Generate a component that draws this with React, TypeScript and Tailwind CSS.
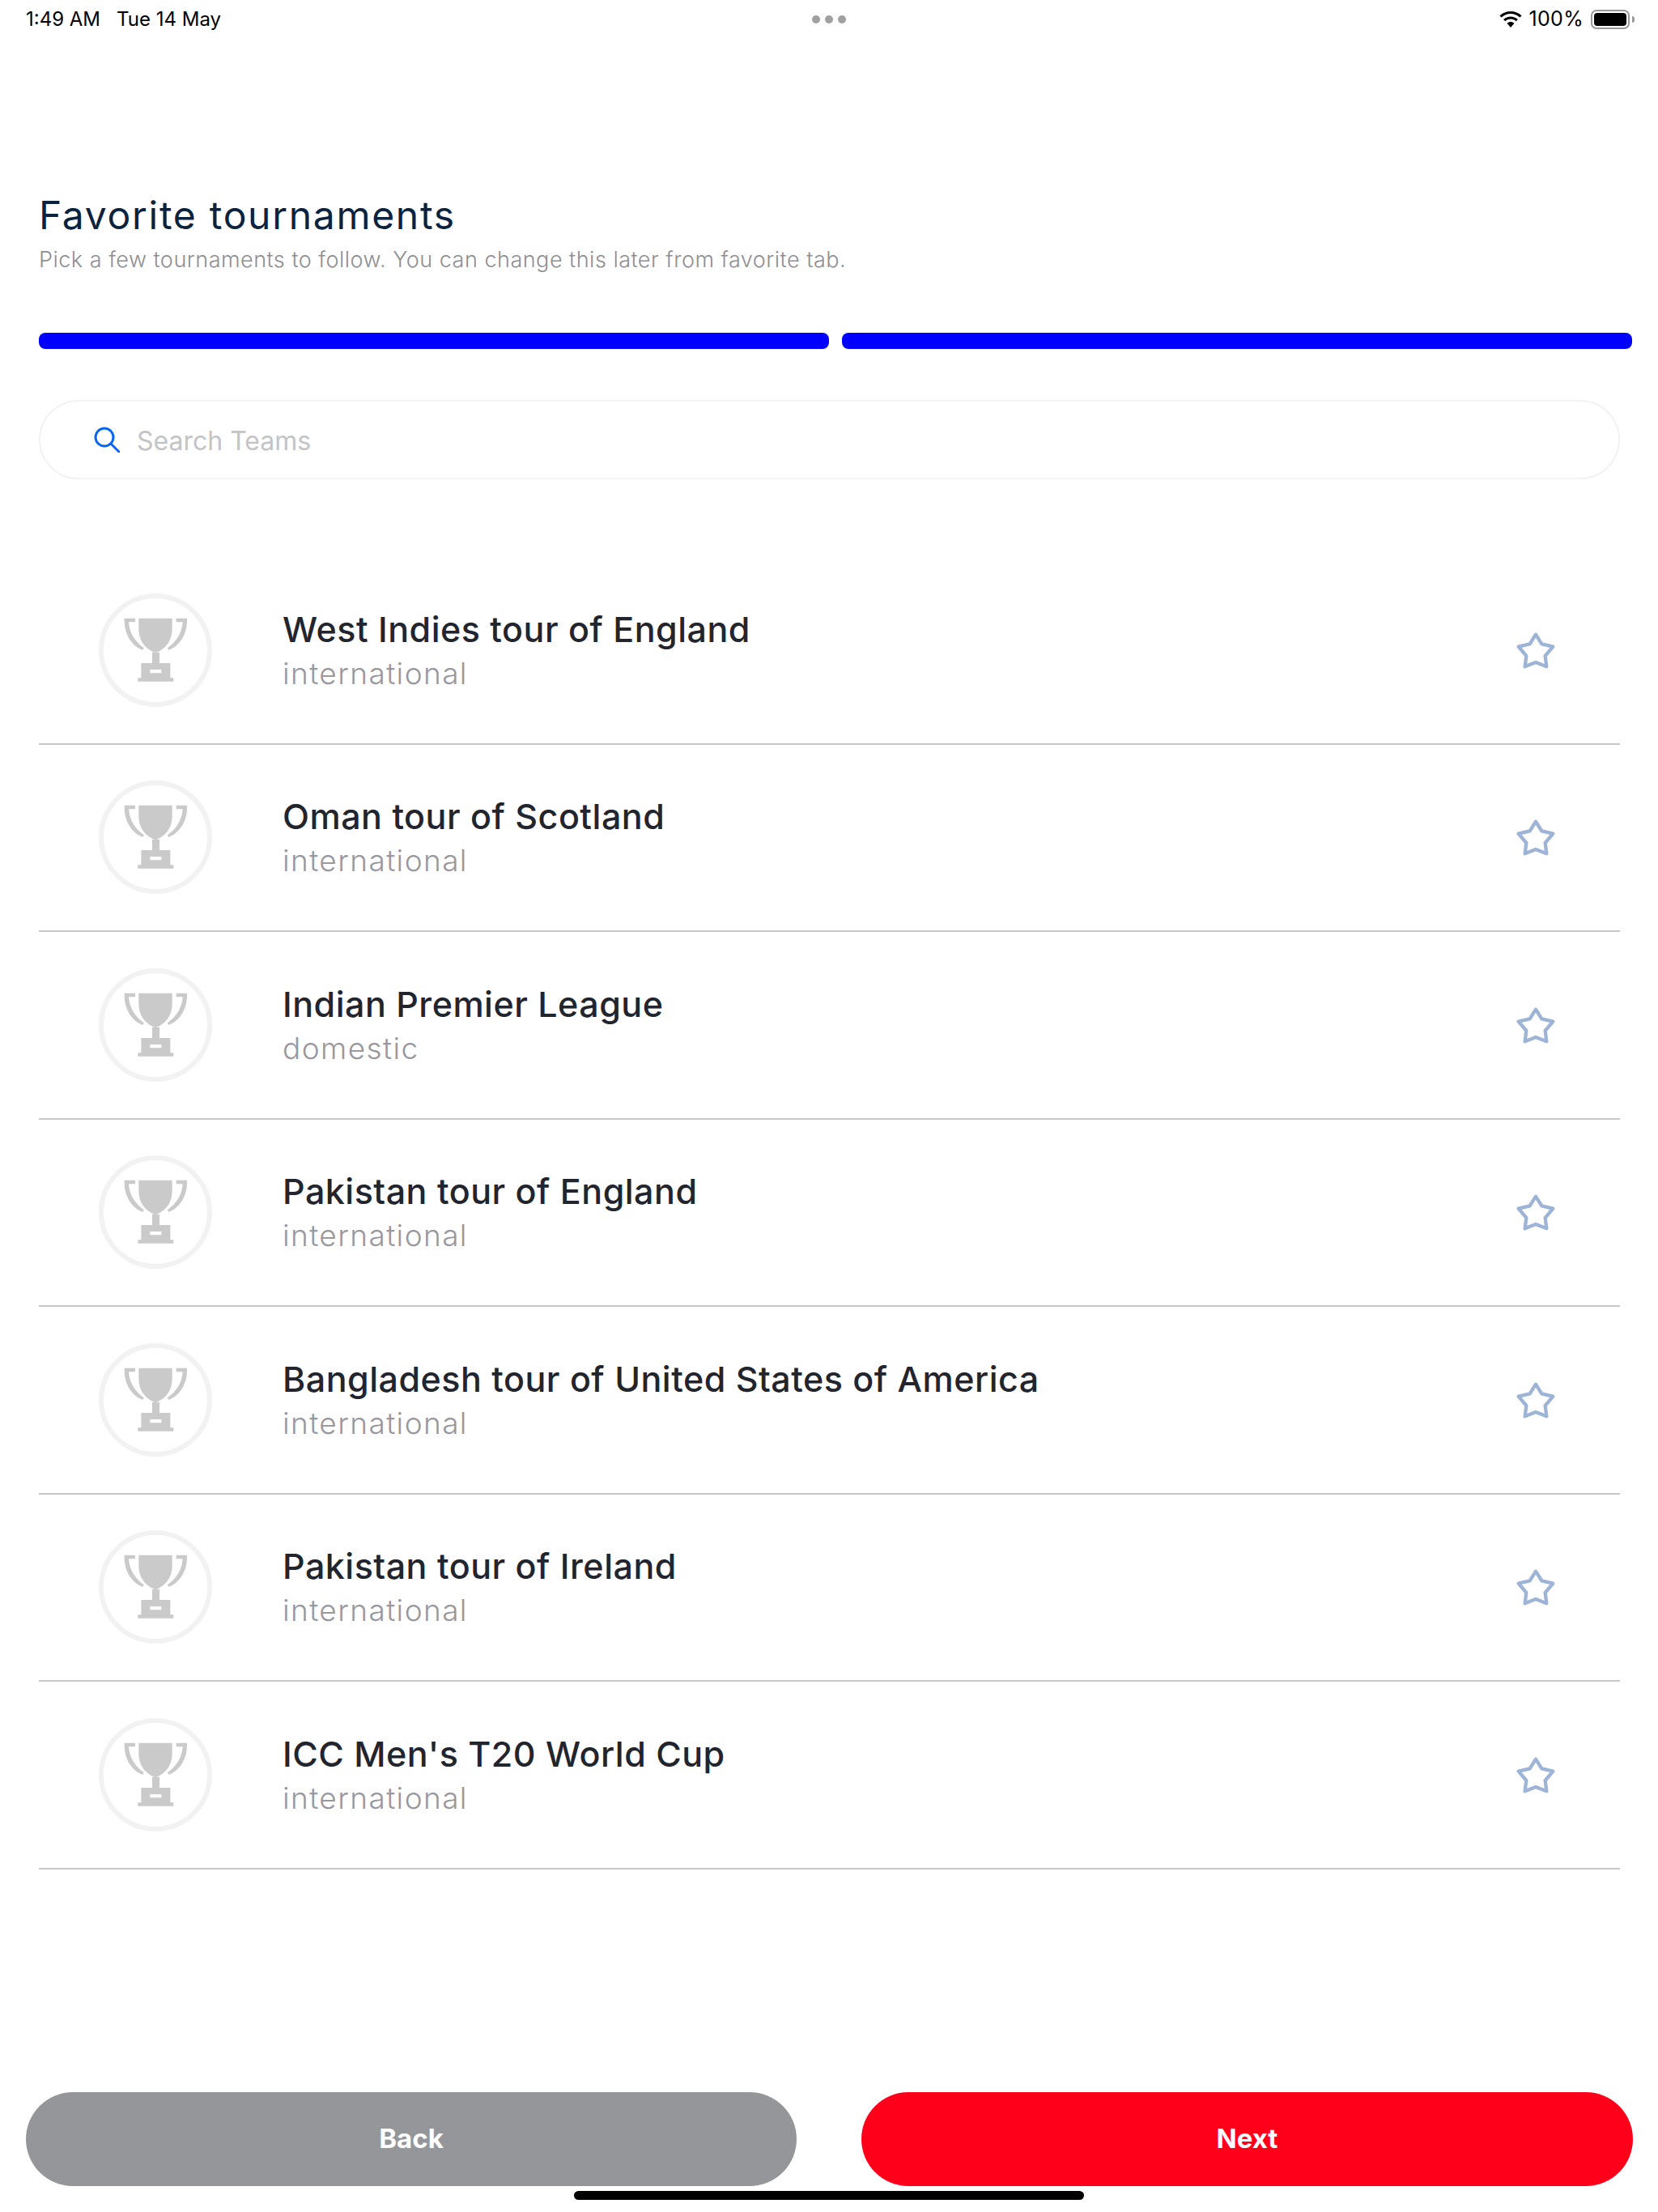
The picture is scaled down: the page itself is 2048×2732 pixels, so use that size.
import React from 'react';

const tournaments = [
    { name: 'West Indies tour of England', type: 'international' },
    { name: 'Oman tour of Scotland', type: 'international' },
    { name: 'Indian Premier League', type: 'domestic' },
    { name: 'Pakistan tour of England', type: 'international' },
    { name: 'Bangladesh tour of United States of America', type: 'international' },
    { name: 'Pakistan tour of Ireland', type: 'international' },
    { name: "ICC Men's T20 World Cup", type: 'international' },
];

const TrophyIcon: React.FC = () => (
    <svg viewBox="155 160 240 240" className="w-[80px] h-[80px]">
        <path fill="#cacaca" d="M213 162H337V200C337 245 315 275 275 290C235 275 213 245 213 200Z" />
        <path fill="#cacaca" d="M160 162H200V176H176C178 215 200 250 232 272L228 280C185 262 158 220 160 162Z" />
        <path fill="#cacaca" d="M392 162H352V176H376C374 215 352 250 320 272L324 280C367 262 394 220 392 162Z" />
        <path fill="#cacaca" fillRule="evenodd" d="M263 288H290V328H330V383H342V396H210V383H222V328H263ZM255 352V365H297V352Z" />
    </svg>
);

const StarIcon: React.FC = () => (
    <svg viewBox="82 35 180 180" className="w-[60px] h-[60px]" fill="none" stroke="#9db4d6" strokeWidth="13" strokeLinejoin="round">
        <path d="M172 67L194 102L236 112L207 146L212 186L172 170L132 186L137 146L108 112L150 102Z" />
    </svg>
);

const App: React.FC = () => {
    return (
        <div className="relative h-[2732px] w-[2048px] flex flex-col bg-white font-['Inter',sans-serif] overflow-hidden">
            <div className="h-[48px] pl-[32px] pr-[29px] flex items-center justify-between text-[24px] text-black">
                <div className="flex gap-[20px] w-[500px]">
                    <span>1:49 AM</span>
                    <span>Tue 14 May</span>
                </div>
                <div className="flex gap-[6px] mr-[3px]">
                    <span className="w-[10px] h-[10px] rounded-full bg-[#a0a0a0]"></span>
                    <span className="w-[10px] h-[10px] rounded-full bg-[#a0a0a0]"></span>
                    <span className="w-[10px] h-[10px] rounded-full bg-[#a0a0a0]"></span>
                </div>
                <div className="flex items-center justify-end w-[500px]">
                    <svg viewBox="0 0 28 20" className="w-[28px] h-[20px] mr-[9px]">
                        <path fill="#000" d="M14 0C8.8 0 4 2 0.4 5.4L2.6 7.6C5.6 4.8 9.6 3 14 3S22.4 4.8 25.4 7.6L27.6 5.4C24 2 19.2 0 14 0Z" />
                        <path fill="#000" d="M14 6.5C10.6 6.5 7.5 7.8 5.1 10L7.3 12.2C9 10.6 11.4 9.6 14 9.6S19 10.6 20.7 12.2L22.9 10C20.5 7.8 17.4 6.5 14 6.5Z" />
                        <path fill="#000" d="M14 13C12.3 13 10.8 13.6 9.6 14.7L14 20L18.4 14.7C17.2 13.6 15.7 13 14 13Z" />
                    </svg>
                    <span className="mr-[9px] text-[25px] tracking-[0.3px]">100%</span>
                    <div className="w-[48px] h-[24px] rounded-[7px] border-2 border-[#999999] p-[2px]">
                        <div className="w-full h-full rounded-[4px] bg-black"></div>
                    </div>
                    <div className="w-[3px] h-[8px] ml-[3px] rounded-r-full bg-[#999999]"></div>
                </div>
            </div>

            <div className="px-[48px] pt-[190px]">
                <h1 className="text-[48px] leading-[56px] font-normal tracking-[1.7px] text-[#0c2340]">Favorite tournaments</h1>
                <p className="mt-[9px] text-[27px] leading-[36px] font-light tracking-[0.5px] text-[#8e8e93]">Pick a few tournaments to follow. You can change this later from favorite tab.</p>
            </div>

            <div className="pl-[48px] pr-[32px] mt-[72px] flex gap-[16px]">
                <div className="flex-1 h-[20px] rounded-[8px] bg-[#0000ff]"></div>
                <div className="flex-1 h-[20px] rounded-[8px] bg-[#0000ff]"></div>
            </div>

            <div className="mx-[48px] w-[1953px] mt-[63px] h-[98px] rounded-[49px] border-2 border-[#f2f2f2] flex items-center pl-[66px]">
                <svg viewBox="0 0 32 32" className="w-[32px] h-[32px]" fill="none" stroke="#0a66f0" strokeWidth="3" strokeLinecap="round">
                    <circle cx="13" cy="13" r="11" />
                    <path d="M21 21L31 31" />
                </svg>
                <span className="ml-[21px] mt-[3px] text-[32px] text-[#c4c4c6]">Search Teams</span>
            </div>

            <div className="mx-[48px] w-[1953px] mt-[96px]">
                {tournaments.map((t) => (
                    <div key={t.name} className="h-[231.5px] border-b-2 border-[#c8c8cc] flex items-center px-[74px]">
                        <div className="w-[140px] h-[140px] rounded-full border-[6px] border-[#f2f2f2] flex items-center justify-center shrink-0">
                            <TrophyIcon />
                        </div>
                        <div className="ml-[87px] mt-[3px] flex-1">
                            <div className="text-[43px] leading-[54px] font-medium tracking-[0.5px] text-[#22252d]">{t.name}</div>
                            <div className="mt-[1px] text-[37px] leading-[54px] font-light tracking-[1.4px] text-[#98989e]">{t.type}</div>
                        </div>
                        <StarIcon />
                    </div>
                ))}
            </div>

            <div className="mt-auto pl-[32px] pr-[31px] pb-[32px] flex justify-between">
                <button className="w-[952px] h-[116px] rounded-[58px] bg-[#959699] text-white text-[33px] font-bold">Back</button>
                <button className="w-[953px] h-[116px] rounded-[58px] bg-[#ff001b] text-white text-[33px] font-bold">Next</button>
            </div>
            <div className="absolute left-[709px] top-[2706px] w-[630px] h-[11px] rounded-full bg-black"></div>
        </div>
    );
};

export default App;
